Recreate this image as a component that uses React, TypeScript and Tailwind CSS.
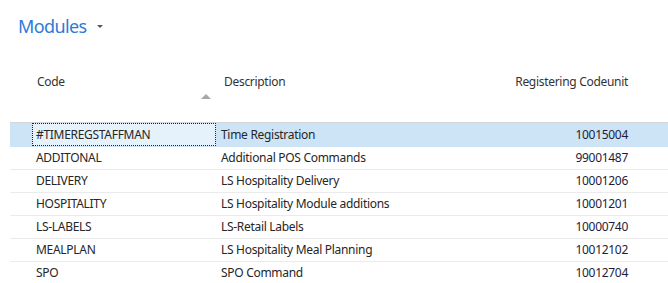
import React from "react";

const rows = [
  { code: "#TIMEREGSTAFFMAN", desc: "Time Registration", num: "10015004", selected: true },
  { code: "ADDITONAL", desc: "Additional POS Commands", num: "99001487" },
  { code: "DELIVERY", desc: "LS Hospitality Delivery", num: "10001206" },
  { code: "HOSPITALITY", desc: "LS Hospitality Module additions", num: "10001201" },
  { code: "LS-LABELS", desc: "LS-Retail Labels", num: "10000740" },
  { code: "MEALPLAN", desc: "LS Hospitality Meal Planning", num: "10012102" },
  { code: "SPO", desc: "SPO Command", num: "10012704" },
];

export default function App() {
  return (
    <div
      className="w-[668px] h-[283px] bg-white overflow-hidden text-[12px] tracking-[-0.3px] text-[#262626]"
      style={{ fontFamily: '"Segoe UI", "Noto Sans", "Open Sans", sans-serif' }}
    >
      <div className="flex items-center h-[52px] pl-[18px]">
        <span className="text-[18px] text-[#2f7ad6] leading-none tracking-[-0.6px]">Modules</span>
        <svg width="6" height="4" viewBox="0 0 6 4" className="ml-[10px] mt-[1px]">
          <path d="M0 0 L6 0 L3 3 Z" fill="#555" />
        </svg>
      </div>
      <div className="pl-[10px]">
        <div className="flex h-[71px] border-b border-[#d6d6d6]">
          <div className="w-[205px] relative pl-[27px] pt-[21px] text-[#333]">
            Code
            <svg width="10" height="5" viewBox="0 0 10 5" className="absolute left-[191px] top-[42px]">
              <path d="M0 5 L5 0 L10 5 Z" fill="#a8a8a8" />
            </svg>
          </div>
          <div className="w-[236px] pl-[9px] pt-[21px] text-[#333]">Description</div>
          <div className="w-[177px] text-right pt-[21px] text-[#333]">Registering Codeunit</div>
        </div>
        {rows.map((r) => (
          <div
            key={r.code}
            className={`flex items-center border-b ${
              r.selected ? "h-[24px] bg-[#cde4f7] border-[#cde4f7]" : "h-[23px] border-[#ebebeb]"
            }`}
          >
            <div className="w-[22px] shrink-0" />
            <div
              className={`w-[184px] shrink-0 h-full flex items-center pl-[3px] ${
                r.selected ? "bg-[#e6f2fb] border border-dotted border-[#222]" : "pl-[4px]"
              }`}
            >
              {r.code}
            </div>
            <div className="w-[235px] shrink-0 pl-[5px]">{r.desc}</div>
            <div className="w-[177px] shrink-0 text-right text-[#1c1c3c]">{r.num}</div>
          </div>
        ))}
      </div>
    </div>
  );
}
